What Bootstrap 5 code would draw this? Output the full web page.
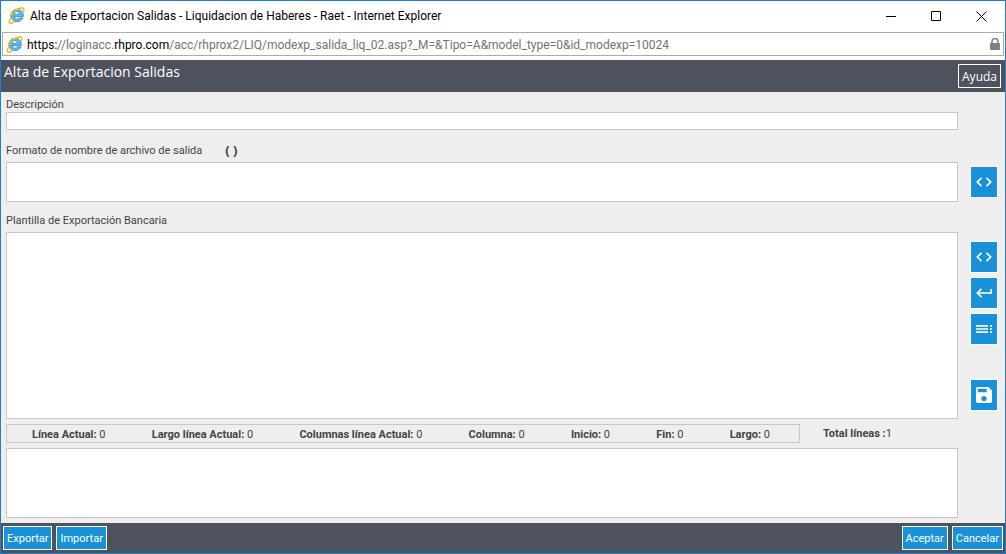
<!DOCTYPE html>
<html lang="es">
<head>
<meta charset="utf-8">
<meta name="viewport" content="width=device-width, initial-scale=1">
<title>Alta de Exportacion Salidas</title>
<link href="https://cdn.jsdelivr.net/npm/bootstrap@5.3.0/dist/css/bootstrap.min.css" rel="stylesheet">
<style>
  :root { --blue: #1991d8; --slate: #4e525d; --edge: #1a80d2; --line: #c8c8c8; }
  body { font-family: Roboto, "Noto Sans", sans-serif; font-size: 11px; line-height: 16px; color: #444; background: #eee; }
  .window { border: 1px solid var(--edge); }
  .title-bar { height: 31px; color: #000; font-size: 12px; padding: 0 1px 2px 7px; }
  .title-bar > span { margin-left: 5px; }
  .caption-btn { width: 45px; height: 28px; background: none; }
  .address { height: 24px; border: 1px solid #ababab; margin: 0 1px 4px 1px; padding: 0 3px; gap: 4px; font-size: 12px; color: #737373; }
  .address span { padding-top: 1px; }
  .address b { font-weight: 400; color: #000; }
  .app-head { height: 32px; background: var(--slate); color: #fff; padding: 0 4px 0 3px; }
  .app-head h1 { font-family: "Open Sans", "Noto Sans", sans-serif; font-size: 14px; line-height: 24px; font-weight: 400; }
  .flat-btn { border: 1px solid #fff; border-radius: 0; background: var(--blue); color: #fff; font-size: 11px; line-height: 24px; height: 24px; padding: 0 3px; }
  .flat-btn:hover { background: #1279b8; color: #fff; }
  .ghost { background: transparent; font-family: "Open Sans", "Noto Sans", sans-serif; font-size: 12px; }
  .app-body { padding: 4px 7px 5px 5px; }
  .form-row { gap: 12px; }
  .side { width: 28px; flex: none; gap: 4px; }
  .tools { padding: 9px 0 8px; }
  .icon-btn { width: 28px; height: 32px; padding: 0; display: flex; align-items: center; justify-content: center; }
  .field { border: 1px solid var(--line); border-radius: 0; background: #fff; padding: 1px 3px; font-size: 11px; line-height: 14px; resize: none; min-height: 0; display: block; }
  .field-line { height: 18px; }
  .field-format { height: 40px; }
  .field-preview { height: 70px; }
  .lbl { padding-top: 2px; line-height: 14px; }
  .lbl-tall { padding-top: 2px; line-height: 22px; margin-top: 6px; }
  .parens { font-family: "Open Sans", "Noto Sans", sans-serif; font-size: 13px; font-weight: 700; margin-left: 23px; }
  .stats { margin: 5px 0; }
  .counts { border: 1px solid var(--line); height: 19px; line-height: 19px; flex: 0 0 83.4%; padding: 0 29px 0 25px; }
  .total { margin-left: 23px; }
  .app-foot { height: 30px; background: var(--slate); padding: 0 2px; }
</style>
</head>
<body>
<div class="window d-flex flex-column min-vh-100">
  <header class="bg-white">
    <div class="title-bar d-flex align-items-center">
      <svg width="17" height="17" viewBox="0 0 17 17" aria-hidden="true">
        <path d="M15.200 9.600H6a3 3 0 0 0 5.500 1.300h3.300a6.200 6.200 0 1 1 .4-1.300zM6 7.300h5.600a2.800 2.800 0 0 0-5.600 0z" fill="#5cc0ee" stroke="#2381c4" stroke-width=".8"/>
        <path d="M3.200 10.500C.8 14 .6 16.300 2.600 16.200c1.200 0 2.600-.8 3.800-1.700M1.800 9.500C4 5.500 9 1.200 13.500.9c2.500-.1 2.800 2 1.700 4.200" fill="none" stroke="#f5bd1e" stroke-width="1.600"/>
      </svg>
      <span class="me-auto">Alta de Exportacion Salidas - Liquidacion de Haberes - Raet - Internet Explorer</span>
      <button class="caption-btn border-0 p-0" aria-label="Minimizar"><svg width="11" height="11" viewBox="0 0 11 11"><path d="M0 5.500h10" stroke="#000"/></svg></button>
      <button class="caption-btn border-0 p-0" aria-label="Maximizar"><svg width="11" height="11" viewBox="0 0 11 11"><path d="M.5.5h9v9h-9z" fill="none" stroke="#000"/></svg></button>
      <button class="caption-btn border-0 p-0" aria-label="Cerrar"><svg width="11" height="11" viewBox="0 0 11 11"><path d="M.5.5l10 10M10.500.5l-10 10" stroke="#000"/></svg></button>
    </div>
    <div class="address d-flex align-items-center">
      <svg width="17" height="17" viewBox="0 0 17 17" aria-hidden="true">
        <path d="M15.200 9.600H6a3 3 0 0 0 5.500 1.300h3.300a6.200 6.200 0 1 1 .4-1.300zM6 7.300h5.600a2.800 2.800 0 0 0-5.600 0z" fill="#5cc0ee" stroke="#2381c4" stroke-width=".8"/>
        <path d="M3.200 10.500C.8 14 .6 16.300 2.600 16.200c1.200 0 2.600-.8 3.800-1.700M1.800 9.500C4 5.500 9 1.200 13.500.9c2.500-.1 2.800 2 1.700 4.200" fill="none" stroke="#f5bd1e" stroke-width="1.600"/>
      </svg>
      <span class="me-auto"><b>https:</b>//loginacc.<b>rhpro.com</b>/acc/rhprox2/LIQ/modexp_salida_liq_02.asp?_M=&amp;Tipo=A&amp;model_type=0&amp;id_modexp=10024</span>
      <svg width="10" height="12" viewBox="0 0 10 12" aria-hidden="true"><path d="M2 6V3.500a3 3 0 0 1 6 0V6" fill="none" stroke="#808080" stroke-width="1.500"/><rect y="5" width="10" height="7" rx="1" fill="#808080"/></svg>
    </div>
  </header>

  <div class="app-head d-flex justify-content-between">
    <h1 class="m-0">Alta de Exportacion Salidas</h1>
    <button class="btn flat-btn ghost align-self-center">Ayuda</button>
  </div>

  <main class="app-body d-flex flex-column flex-grow-1">
    <label class="lbl" for="descripcion">Descripción</label>
    <div class="form-row d-flex">
      <input id="descripcion" type="text" class="form-control field field-line">
      <div class="side"></div>
    </div>

    <div class="d-flex align-items-center mt-2"><label class="lbl-tall mt-0" for="formato">Formato de nombre de archivo de salida</label><span class="parens">( )</span></div>
    <div class="form-row d-flex">
      <textarea id="formato" class="form-control field field-format"></textarea>
      <div class="side d-flex align-items-center"><button class="btn flat-btn icon-btn" aria-label="Insertar etiqueta"><svg width="16" height="10" viewBox="0 0 16 10" fill="none" stroke="#fff" stroke-width="1.700"><path d="M5.500.8L1.300 5l4.200 4.200M10.500.8L14.700 5l-4.200 4.200"/></svg></button></div>
    </div>

    <label class="lbl-tall" for="plantilla">Plantilla de Exportación Bancaria</label>
    <div class="form-row d-flex flex-grow-1">
      <textarea id="plantilla" class="form-control field"></textarea>
      <div class="side tools d-flex flex-column">
        <button class="btn flat-btn icon-btn" aria-label="Insertar etiqueta"><svg width="16" height="10" viewBox="0 0 16 10" fill="none" stroke="#fff" stroke-width="1.700"><path d="M5.500.8L1.300 5l4.200 4.200M10.500.8L14.700 5l-4.200 4.200"/></svg></button>
        <button class="btn flat-btn icon-btn" aria-label="Salto de línea"><svg width="16" height="10" viewBox="0 0 16 10" fill="none" stroke="#fff" stroke-width="1.700"><path d="M15.200 1v4H1.500M5.500.8L1.300 5l4.200 4.200"/></svg></button>
        <button class="btn flat-btn icon-btn" aria-label="Lista"><svg width="16" height="8" viewBox="0 0 16 8" fill="#fff"><path d="M0 0h12v1.700H0zM0 3.150h12v1.700H0zM0 6.300h12V8H0zM14 0h2v1.700h-2zM14 3.150h2v1.700h-2zM14 6.300h2V8h-2z"/></svg></button>
        <button class="btn flat-btn icon-btn mt-auto" aria-label="Guardar"><svg width="16" height="16" viewBox="3 3 18 18" fill="#fff"><path d="M17 3H5a2 2 0 0 0-2 2v14c0 1.100.9 2 2 2h14c1.100 0 2-.9 2-2V7l-4-4zm-5 16a3 3 0 1 1 0-6 3 3 0 0 1 0 6zm3-10H5V5h10v4z"/></svg></button>
      </div>
    </div>

    <div class="form-row d-flex stats">
      <div class="w-100 d-flex align-items-center">
        <div class="counts d-flex justify-content-between">
          <span><b>Línea Actual:</b> 0</span>
          <span><b>Largo línea Actual:</b> 0</span>
          <span><b>Columnas línea Actual:</b> 0</span>
          <span><b>Columna:</b> 0</span>
          <span><b>Inicio:</b> 0</span>
          <span><b>Fin:</b> 0</span>
          <span><b>Largo:</b> 0</span>
        </div>
        <span class="total"><b>Total líneas :</b>1</span>
      </div>
      <div class="side"></div>
    </div>
    <div class="form-row d-flex">
      <textarea class="form-control field field-preview" aria-label="Vista previa"></textarea>
      <div class="side"></div>
    </div>
  </main>

  <footer class="app-foot d-flex align-items-center gap-1">
    <button class="btn flat-btn">Exportar</button>
    <button class="btn flat-btn me-auto">Importar</button>
    <button class="btn flat-btn">Aceptar</button>
    <button class="btn flat-btn">Cancelar</button>
  </footer>
</div>
<script src="https://cdn.jsdelivr.net/npm/bootstrap@5.3.0/dist/js/bootstrap.bundle.min.js"></script>
</body>
</html>
